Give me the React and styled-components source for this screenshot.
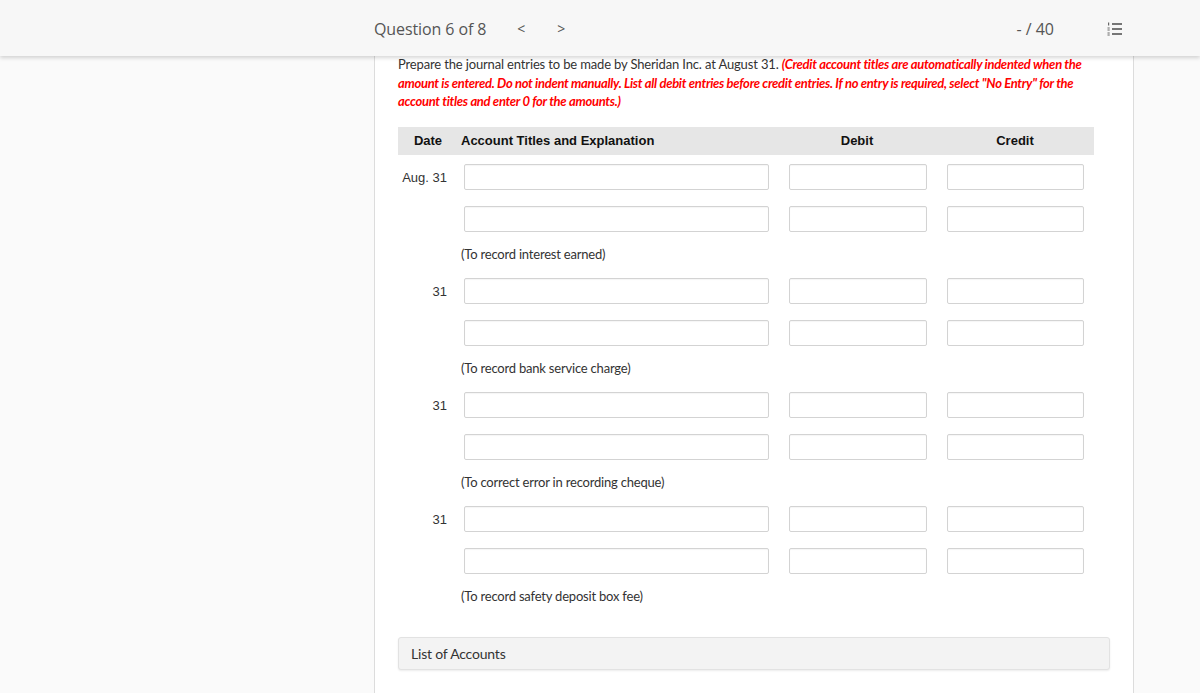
import React from "react";
import styled, { createGlobalStyle } from "styled-components";

const Global = createGlobalStyle`
  html, body { margin: 0; padding: 0; }
  body { background: #fafafa; font-family: Lato, "Open Sans", sans-serif; }
  * { box-sizing: border-box; }
`;

const Page = styled.div`
  width: 1200px;
  height: 693px;
  overflow: hidden;
  display: flex;
  flex-direction: column;
`;

const TopBar = styled.header`
  position: relative;
  z-index: 2;
  height: 56px;
  flex: none;
  background: #f7f7f7;
  box-shadow: 0 2px 4px rgba(0, 0, 0, 0.16);
  display: flex;
  align-items: center;
  padding-left: 374px;
  padding-right: 77px;
  padding-top: 2px;
  font-family: "Open Sans", sans-serif;
  color: #555;
`;

const QTitle = styled.span`
  font-size: 16px;
  letter-spacing: -0.1px;
`;

const Chevron = styled.span`
  font-size: 14px;
  color: #555;
  margin-left: ${(p) => p.$ml}px;
  line-height: 1;
`;

const Spacer = styled.div`
  flex: 1;
`;

const Score = styled.span`
  font-size: 16px;
  margin-right: 53px;
`;

const Body = styled.div`
  flex: 1;
  display: flex;
`;

const SidePane = styled.div`
  background: #fafafa;
  width: ${(p) => (p.$w ? `${p.$w}px` : "auto")};
  flex: ${(p) => (p.$w ? "none" : "1")};
`;

const Main = styled.main`
  width: 760px;
  flex: none;
  background: #fff;
  border-left: 1px solid #dcdcdc;
  border-right: 1px solid #dcdcdc;
  padding: 0 0 0 23px;
`;

const Instructions = styled.p`
  margin: -1px 0 0;
  width: 692px;
  font-family: Lato, sans-serif;
  font-size: 13px;
  line-height: 18.5px;
  color: #333;
  letter-spacing: -0.15px;
`;

const Warn = styled.em`
  color: #f00;
  font-weight: 700;
  letter-spacing: -0.3px;
`;

const Table = styled.div`
  margin-top: 16px;
  width: 696px;
  display: grid;
  grid-template-columns: 60px 320px 158px 158px;
`;

const HeadCell = styled.div`
  height: 28px;
  background: #e6e6e6;
  display: flex;
  align-items: center;
  justify-content: ${(p) => p.$align || "center"};
  padding-left: ${(p) => p.$pl || 0}px;
  font-family: "Liberation Sans", Arial, sans-serif;
  font-weight: 700;
  font-size: 13px;
  color: #111;
`;

const DateCell = styled.div`
  height: ${(p) => p.$h}px;
  text-align: right;
  padding-right: 11px;
  padding-top: 15px;
  font-family: "Liberation Sans", Arial, sans-serif;
  font-size: 13px;
  color: #333;
  line-height: 15px;
`;

const InputCell = styled.div`
  height: 42px;
  padding-top: 9px;
  padding-left: ${(p) => p.$pl}px;
`;

const Field = styled.div`
  width: ${(p) => p.$w}px;
  height: 26px;
  background: #fff;
  border: 1px solid #d3d3d3;
  border-radius: 2px;
  box-shadow: inset 0 1px 1px rgba(0, 0, 0, 0.04);
`;

const Note = styled.div`
  grid-column: 2 / 5;
  height: 30px;
  padding-left: 3px;
  padding-top: 8px;
  font-family: Lato, sans-serif;
  font-size: 13px;
  line-height: 15px;
  color: #333;
  letter-spacing: -0.2px;
`;

const NoteGap = styled.div`
  height: 30px;
`;

const AccountsBox = styled.div`
  margin-top: 26px;
  width: 712px;
  height: 33px;
  background: #f3f3f3;
  border: 1px solid #e2e2e2;
  border-radius: 3px;
  box-shadow: 0 1px 2px rgba(0, 0, 0, 0.08);
  display: flex;
  align-items: center;
  padding-left: 12px;
  font-family: Lato, sans-serif;
  font-size: 14px;
  color: #333;
  letter-spacing: -0.2px;
`;

const ListIcon = () => (
  <svg width="16" height="14" viewBox="0 0 16 14" fill="none">
    <g stroke="#555" strokeWidth="1.6">
      <line x1="5" y1="2" x2="15" y2="2" />
      <line x1="5" y1="7" x2="15" y2="7" />
      <line x1="5" y1="12" x2="15" y2="12" />
    </g>
    <g fill="#666">
      <rect x="1" y="0.5" width="1.2" height="3" />
      <rect x="0.5" y="5.5" width="2.2" height="1" />
      <rect x="0.5" y="7.5" width="2.2" height="1" />
      <rect x="0.5" y="10.5" width="2.2" height="1" />
      <rect x="0.5" y="12.5" width="2.2" height="1" />
    </g>
  </svg>
);

const entries = [
  { date: "Aug. 31", note: "(To record interest earned)" },
  { date: "31", note: "(To record bank service charge)" },
  { date: "31", note: "(To correct error in recording cheque)" },
  { date: "31", note: "(To record safety deposit box fee)" },
];

const InputRow = () => (
  <>
    <InputCell $pl={6}>
      <Field $w={305} />
    </InputCell>
    <InputCell $pl={11}>
      <Field $w={138} />
    </InputCell>
    <InputCell $pl={11}>
      <Field $w={137} />
    </InputCell>
  </>
);

export default function App() {
  return (
    <Page>
      <Global />
      <TopBar>
        <QTitle>Question 6 of 8</QTitle>
        <Chevron $ml={31}>&lt;</Chevron>
        <Chevron $ml={32}>&gt;</Chevron>
        <Spacer />
        <Score>- / 40</Score>
        <ListIcon />
      </TopBar>
      <Body>
        <SidePane $w={374} />
        <Main>
          <Instructions>
            Prepare the journal entries to be made by Sheridan Inc. at August 31.{" "}
            <Warn>
              (Credit account titles are automatically indented when the amount is entered. Do not
              indent manually. List all debit entries before credit entries. If no entry is
              required, select "No Entry" for the account titles and enter 0 for the amounts.)
            </Warn>
          </Instructions>
          <Table>
            <HeadCell>Date</HeadCell>
            <HeadCell $align="flex-start" $pl={3}>
              Account Titles and Explanation
            </HeadCell>
            <HeadCell>Debit</HeadCell>
            <HeadCell>Credit</HeadCell>
            {entries.map((e, i) => (
              <React.Fragment key={i}>
                <DateCell $h={42}>{e.date}</DateCell>
                <InputRow />
                <DateCell $h={42} />
                <InputRow />
                <NoteGap />
                <Note>{e.note}</Note>
              </React.Fragment>
            ))}
          </Table>
          <AccountsBox>List of Accounts</AccountsBox>
        </Main>
        <SidePane />
      </Body>
    </Page>
  );
}
